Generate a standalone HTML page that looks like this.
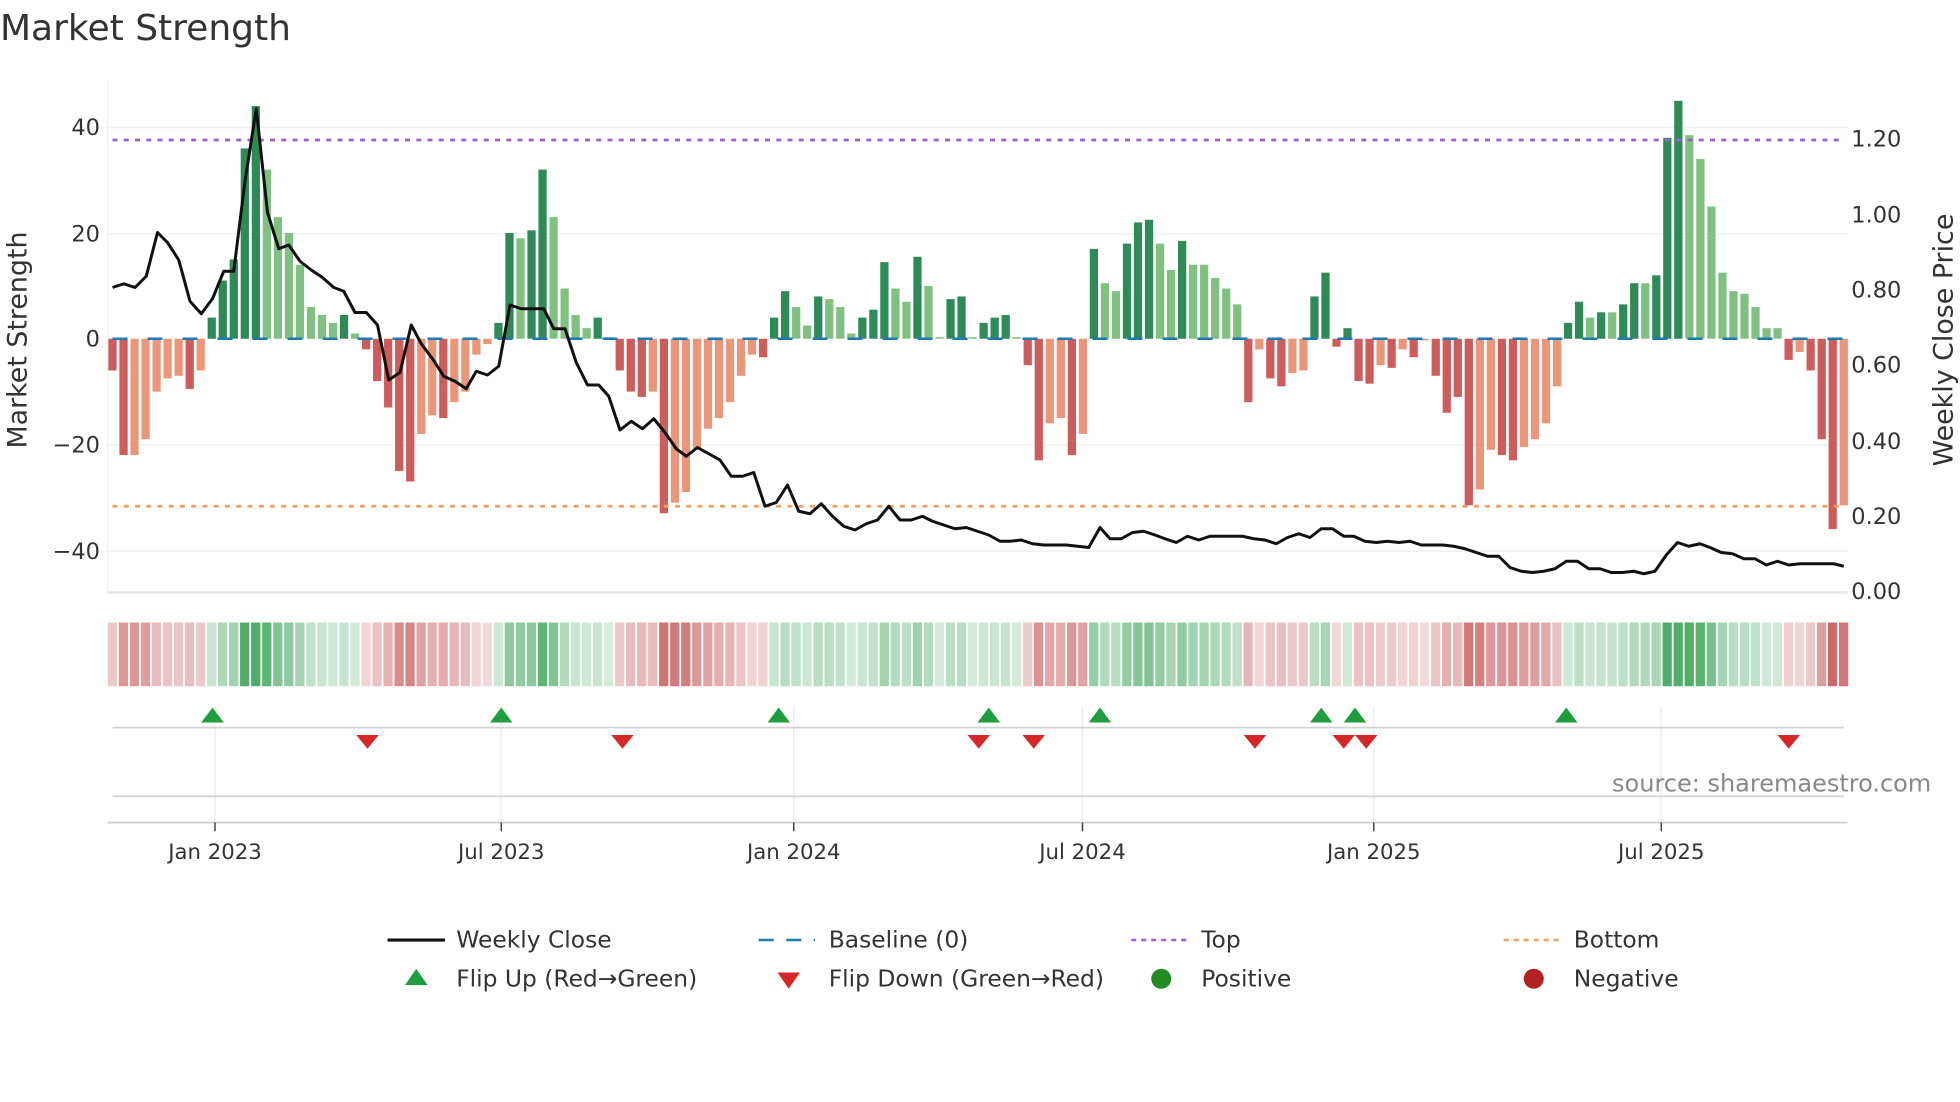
<!DOCTYPE html>
<html><head><meta charset="utf-8"><style>
html,body{margin:0;padding:0;background:#fff;width:1960px;height:1102px;overflow:hidden}
svg{display:block;font-family:"DejaVu Sans","Liberation Sans",sans-serif}
</style></head><body>
<svg id="s" width="1960" height="1102" viewBox="0 0 1568 881.6" xmlns="http://www.w3.org/2000/svg">
<text x="0" y="32" font-size="28.8" fill="#333">Market Strength</text>
<g stroke="#eef0f2" stroke-width="1.2">
<line x1="86" x2="1478" y1="102" y2="102"/><line x1="86" x2="1478" y1="187" y2="187"/>
<line x1="86" x2="1478" y1="356" y2="356"/><line x1="86" x2="1478" y1="441" y2="441"/>
<line x1="86" x2="86" y1="65" y2="475"/>
</g>
<line x1="86" x2="1478" y1="474" y2="474" stroke="#e4e6e8" stroke-width="2"/>
<g font-size="18" fill="#333" text-anchor="end">
<text x="80" y="108">40</text><text x="80" y="193">20</text><text x="80" y="277">0</text>
<text x="80" y="362">−20</text><text x="80" y="447">−40</text>
</g>
<g font-size="18" fill="#333">
<text x="1481" y="117">1.20</text><text x="1481" y="178">1.00</text><text x="1481" y="238">0.80</text>
<text x="1481" y="298">0.60</text><text x="1481" y="359">0.40</text><text x="1481" y="419">0.20</text>
<text x="1481" y="479">0.00</text>
</g>
<text transform="translate(21,272) rotate(-90)" font-size="21.5" fill="#333" text-anchor="middle">Market Strength</text>
<text transform="translate(1562,272) rotate(-90)" font-size="21.5" fill="#333" text-anchor="middle">Weekly Close Price</text>
<g id="bars"></g>
<g id="strip"></g>
<line x1="90" x2="1475" y1="271" y2="271" stroke="#1f77b4" stroke-width="2" stroke-dasharray="12,16"/>
<line x1="90" x2="1475" y1="112" y2="112" stroke="#9b5fd6" stroke-width="2.2" stroke-dasharray="4,5"/>
<line x1="90" x2="1475" y1="405" y2="405" stroke="#f0a060" stroke-width="2.2" stroke-dasharray="4,5"/>
<polyline id="price" fill="none" stroke="#111" stroke-width="2.4" stroke-linejoin="round"/>
<g stroke="#eceef0" stroke-width="1.2">
<line x1="172" x2="172" y1="565" y2="658"/><line x1="401" x2="401" y1="565" y2="658"/>
<line x1="635" x2="635" y1="565" y2="658"/><line x1="866" x2="866" y1="565" y2="658"/>
<line x1="1099" x2="1099" y1="565" y2="658"/><line x1="1329" x2="1329" y1="565" y2="658"/>
</g>
<line x1="90" x2="1475" y1="582" y2="582" stroke="#d4d4d4" stroke-width="1.5"/>
<line x1="90" x2="1475" y1="637" y2="637" stroke="#d4d4d4" stroke-width="1.5"/>
<line x1="86" x2="1478" y1="658" y2="658" stroke="#d0d0d0" stroke-width="1.5"/>
<g stroke="#444" stroke-width="1.2">
<line x1="172" x2="172" y1="658" y2="665"/><line x1="401" x2="401" y1="658" y2="665"/>
<line x1="635" x2="635" y1="658" y2="665"/><line x1="866" x2="866" y1="658" y2="665"/>
<line x1="1099" x2="1099" y1="658" y2="665"/><line x1="1329" x2="1329" y1="658" y2="665"/>
</g>
<g id="marks"></g>
<text x="1545" y="633" font-size="19.2" fill="#888" text-anchor="end">source: sharemaestro.com</text>
<g font-size="17" fill="#333" text-anchor="middle">
<text x="172" y="687">Jan 2023</text><text x="401" y="687">Jul 2023</text><text x="635" y="687">Jan 2024</text>
<text x="866" y="687">Jul 2024</text><text x="1099" y="687">Jan 2025</text><text x="1329" y="687">Jul 2025</text>
</g>
<g font-size="18.7" fill="#333">
<line x1="310" x2="356" y1="752" y2="752" stroke="#111" stroke-width="2.5"/><text x="365" y="758">Weekly Close</text>
<line x1="607" x2="652" y1="752" y2="752" stroke="#1f77b4" stroke-width="2" stroke-dasharray="12,10"/><text x="663" y="758">Baseline (0)</text>
<line x1="905" x2="950" y1="752" y2="752" stroke="#9b5fd6" stroke-width="2" stroke-dasharray="4,4"/><text x="961" y="758">Top</text>
<line x1="1203" x2="1248" y1="752" y2="752" stroke="#f0a060" stroke-width="2" stroke-dasharray="4,4"/><text x="1259" y="758">Bottom</text>
<polygon points="324,788 333,775 342,788" fill="#1e9e3e"/><text x="365" y="789">Flip Up (Red→Green)</text>
<polygon points="622,778 640,778 631,791" fill="#d62728"/><text x="663" y="789">Flip Down (Green→Red)</text>
<circle cx="929" cy="783" r="8" fill="#228b22"/><text x="961" y="789">Positive</text>
<circle cx="1227" cy="783" r="8" fill="#b22222"/><text x="1259" y="789">Negative</text>
</g>
</svg>
<script>
var B=[[-6,1],[-22,1],[-22,0],[-19,0],[-10,0],[-7.5,0],[-7,0],[-9.5,1],[-6,0],[4,1],[11,1],[15,1],[36,1],[44,1],[32,0],[23,0],[20,0],[14,0],[6,0],[4.5,0],[3,0],[4.5,1],[1,0],[-2,1],[-8,1],[-13,1],[-25,1],[-27,1],[-18,0],[-14.5,0],[-15,1],[-12,0],[-10,0],[-3,0],[-1,0],[3,1],[20,1],[19,0],[20.5,1],[32,1],[23,0],[9.5,0],[4.5,0],[2,0],[4,1],[0.3,0],
[-6,1],[-10,1],[-11,1],[-10,0],[-33,1],[-31,0],[-29,0],[-21,0],[-17,0],[-15,0],[-12,0],[-7,0],[-3,0],[-3.5,1],[4,1],[9,1],[6,0],[2.5,0],[8,1],[7.5,0],[6,0],[1,0],[4,1],[5.5,1],[14.5,1],[9.5,0],[7,0],[15.5,1],[10,0],[0.3,0],[7.5,1],[8,1],[0.3,0],[3,1],[4,1],[4.5,1],[0.3,0],[-5,1],[-23,1],[-16,0],[-15,0],[-22,1],[-18,0],[17,1],[10.5,0],[9,0],[18,1],[22,1],[22.5,1],[18,0],[13,0],[18.5,1],[14,0],[14,0],[11.5,0],[9.5,0],[6.5,0],
[-12,1],[-2,0],[-7.5,1],[-9,1],[-6.5,0],[-6,0],[8,1],[12.5,1],[-1.5,1],[2,1],[-8,1],[-8.5,1],[-5,0],[-5.5,1],[-2,0],[-3.5,1],[-0.3,0],[-7,1],[-14,1],[-11,1],[-31.5,1],[-28.5,0],[-21,0],[-22,1],[-23,1],[-20.5,0],[-19,0],[-16,0],[-9,0],[3,1],[7,1],[4,0],[5,1],[5,0],[6.5,1],[10.5,1],[10.5,0],[12,1],[38,1],[45,1],[38.5,0],[34,0],[25,0],[12.5,0],[9,0],[8.5,0],[6,0],[2,0],[2,0],[-4,1],[-2.5,0],[-6,1],[-19,1],[-36,1],[-31.5,0]];
var NS="http://www.w3.org/2000/svg";
function el(t,a,p){var e=document.createElementNS(NS,t);for(var k in a)e.setAttribute(k,a[k]);p.appendChild(e);return e;}
var n=B.length,x0=90,x1=1475,dx=(x1-x0)/(n-1),bg=document.getElementById('bars'),sg=document.getElementById('strip');
B.forEach(function(b,i){var v=b[0],x=x0+i*dx,h=Math.abs(v)*4.23,y=v>=0?271-h:271;
var c=v>=0?(b[1]?'#2e8b57':'#80c080'):(b[1]?'#cd5c5c':'#e9967a');
el('rect',{x:x-3.3,y:y,width:6.6,height:Math.max(h,1),fill:c},bg);
var a=Math.min(0.85,0.2+Math.abs(v)/55);
var sc=v>=0?'rgba(50,160,80,'+a.toFixed(2)+')':'rgba(195,80,80,'+a.toFixed(2)+')';
el('rect',{x:x-dx/2+0.6,y:498,width:dx-1.4,height:51,fill:sc},sg);});
var P=[[90,230],[99,227],[108,230],[117,221],[126,186],[134,194],[143,208],[152,241],[161,251],[170,239],[179,217],[187,217],[196,145],[205,87],[214,170],[223,199],[231,196],[240,209],[249,216],[258,222],[267,230],[275,233],[284,250],[293,250],[302,260],[311,304],[320,298],[329,260],[337,275],[346,287],[355,301],[364,305],[373,311],[381,297],[390,300],[399,293],[408,244],[417,247],[426,247],[435,247],[443,263],[452,263],[461,290],[470,308],[479,308],[487,317],[496,344],[505,337],[514,343],[523,335],[532,346],[541,359],[549,365],[558,358],[567,363],[576,368],[585,381],[594,381],[603,378],[612,405],[621,402],[630,388],[639,409],[648,411],[657,403],[666,413],[675,421],[684,424],[693,419],[702,416],[711,405],[720,416],[729,416],[738,413],[746,417],[755,420],[764,423],[773,422],[782,425],[791,428],[800,433],[808,433],[817,432],[826,435],[835,436],[844,436],[853,436],[862,437],[871,438],[880,422],[888,431],[897,431],[906,426],[915,425],[924,428],[932,431],[941,434],[950,429],[959,432],[968,429],[977,429],[986,429],[994,429],[1003,431],[1012,432],[1021,435],[1030,430],[1039,427],[1048,430],[1057,423],[1066,423],[1075,429],[1083,429],[1092,433],[1101,434],[1110,433],[1119,434],[1128,433],[1137,436],[1145,436],[1154,436],[1163,437],[1172,439],[1181,442],[1190,445],[1199,445],[1208,454],[1217,457],[1226,458],[1235,457],[1244,455],[1253,449],[1262,449],[1271,455],[1280,455],[1289,458],[1298,458],[1307,457],[1315,459],[1324,457],[1333,444],[1342,434],[1351,437],[1360,435],[1368,438],[1377,442],[1386,443],[1395,447],[1404,447],[1413,452],[1422,449],[1431,452],[1440,451],[1449,451],[1458,451],[1467,451],[1475,453]];
document.getElementById('price').setAttribute('points',P.map(function(p){return p.join(',')}).join(' '));
var mg=document.getElementById('marks');
[170,401,623,791,880,1057,1084,1253].forEach(function(x){el('polygon',{points:(x-9)+',578 '+x+',566 '+(x+9)+',578',fill:'#1e9e3e'},mg);});
[294,498,783,827,1004,1075,1093,1431].forEach(function(x){el('polygon',{points:(x-9)+',588 '+(x+9)+',588 '+x+',599',fill:'#d62728'},mg);});
</script>
</body></html>
